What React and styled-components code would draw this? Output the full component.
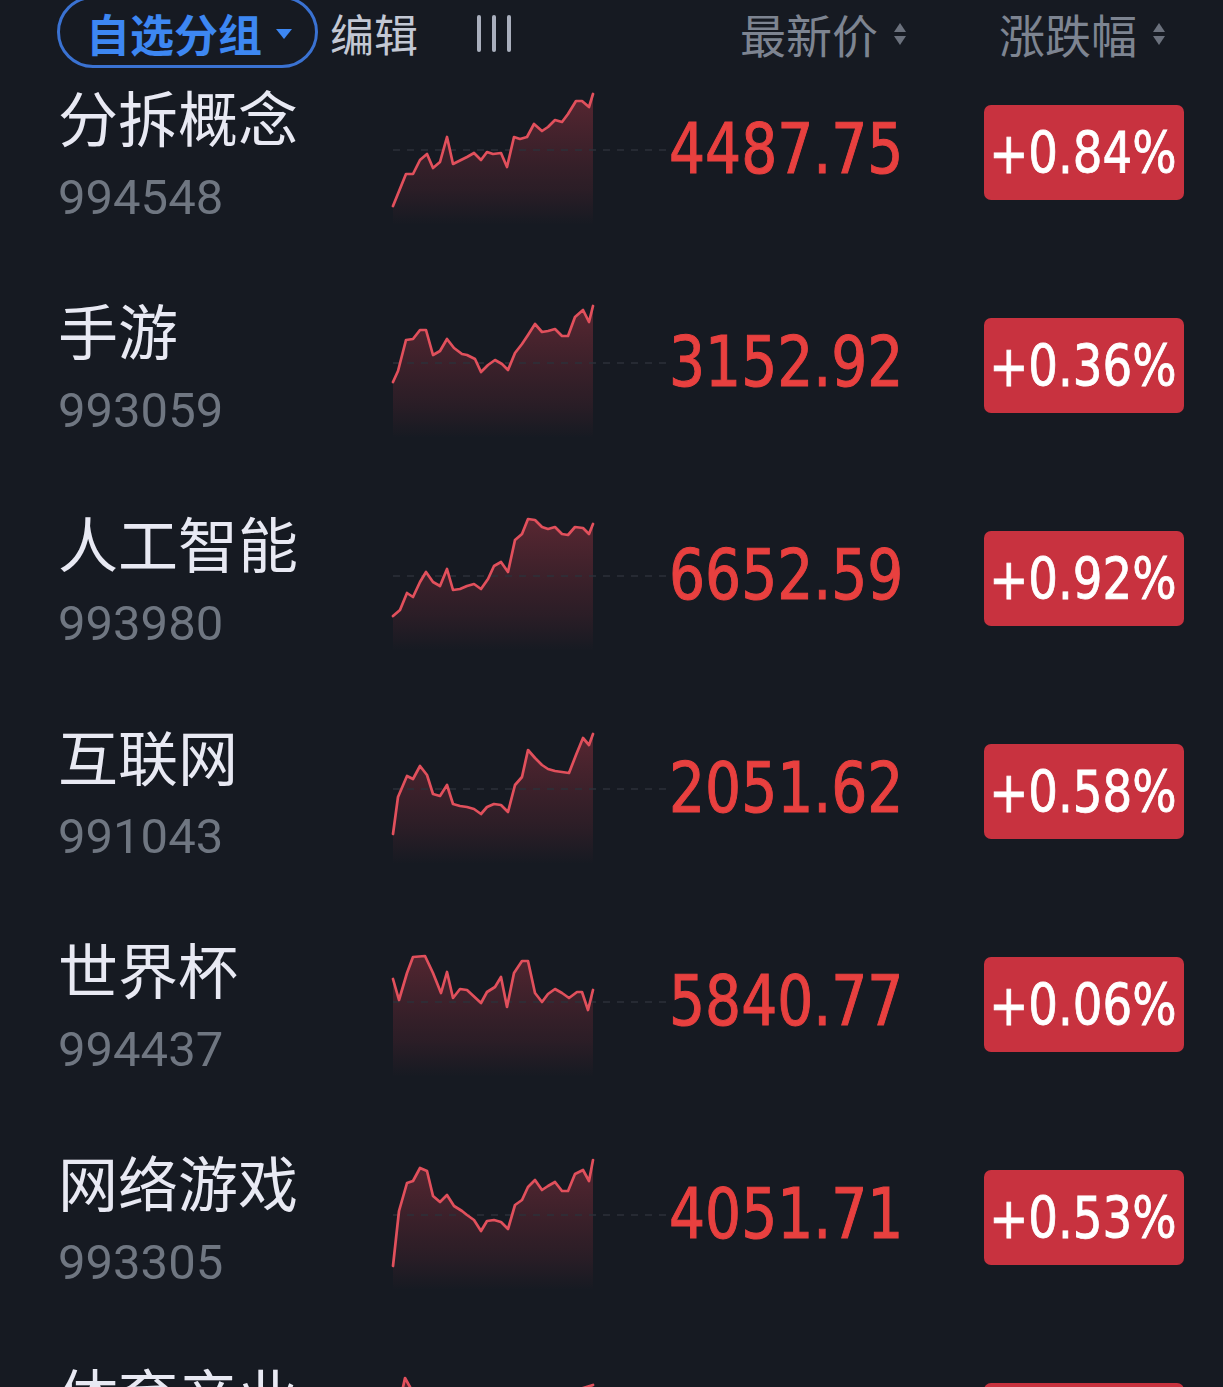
import React, { useId } from 'react'
import styled, { createGlobalStyle } from 'styled-components'

const GlobalStyle = createGlobalStyle`
  html, body {
    margin: 0;
    padding: 0;
    background: #161a22;
  }
  body {
    font-family: "Noto Sans CJK SC", "Noto Sans", sans-serif;
    overflow: hidden;
  }
`;

const NUM_FONT = `"DejaVu Sans Condensed", "DejaVu Sans", sans-serif`;

const Page = styled.div`
  width: 1223px;
  height: 1387px;
  overflow: hidden;
  background: #161a22;
`;

const Header = styled.div`
  display: flex;
  align-items: center;
  height: 66px;
  padding: 0 58px 0 57px;
`;

const Pill = styled.div`
  box-sizing: border-box;
  width: 261px;
  height: 72px;
  margin-top: -3px;
  padding: 2px 0 0 26px;
  border: 3px solid #3a72d2;
  border-radius: 36px;
  display: flex;
  align-items: center;
  gap: 14px;
  color: #3d87f2;
  font-size: 44px;
  font-weight: 700;
`;

const Caret = styled.span`
  width: 0;
  height: 0;
  border-left: 8px solid transparent;
  border-right: 8px solid transparent;
  border-top: 10px solid #3d87f2;
  margin-top: 2px;
`;

const EditText = styled.span`
  margin-left: 12px;
  font-size: 44px;
  color: #c3c8d4;
`;

const ColumnsIcon = styled.div`
  margin-left: 59px;
  display: flex;
  gap: 11px;
  height: 37px;
  span {
    width: 4px;
    border-radius: 2px;
    background: #a9afbd;
  }
`;

const SortGroup = styled.div`
  display: flex;
  align-items: center;
  gap: 16px;
  margin-left: ${p => p.$offset};
  font-size: 46px;
  color: #7d8491;
`;

const SortArrows = styled.div`
  display: flex;
  flex-direction: column;
  gap: 4px;
  margin-top: 2px;
  span {
    width: 0;
    height: 0;
    border-left: 6px solid transparent;
    border-right: 6px solid transparent;
  }
  span:first-child { border-bottom: 9px solid #6b717d; }
  span:last-child { border-top: 9px solid #6b717d; }
`;

const Row = styled.div`
  box-sizing: border-box;
  height: 213px;
  padding: 0 39px 45px 58px;
  display: grid;
  grid-template-columns: 322px 290px 233px 1fr;
  align-items: center;
`;

const NameBlock = styled.div`
  align-self: start;
  margin-top: 14px;
  display: flex;
  flex-direction: column;
  gap: 13px;
`;

const Name = styled.div`
  font-size: 60px;
  line-height: 72px;
  color: #e8e9f3;
  white-space: nowrap;
`;

const Code = styled.div`
  font-family: Roboto, "Noto Sans", sans-serif;
  font-size: 49px;
  line-height: 66px;
  color: #6f7681;
`;

const Chart = styled.svg`
  display: block;
  margin-top: 12px;
`;

const Narrow = styled.span`
  display: inline-block;
  white-space: nowrap;
  transform: scaleX(${p => p.$x});
  transform-origin: ${p => p.$origin};
`;

const Price = styled.div`
  display: flex;
  justify-content: flex-end;
  font-family: ${NUM_FONT};
  font-size: 70px;
  color: #e8403f;
  -webkit-text-stroke: 1px #e8403f;
  line-height: 1;
  margin-top: -3px;
`;

const Badge = styled.div`
  justify-self: end;
  width: 200px;
  height: 95px;
  margin-top: 5px;
  border-radius: 7px;
  background: #c8323f;
  color: #ffffff;
  -webkit-text-stroke: 0.8px #ffffff;
  font-family: ${NUM_FONT};
  font-size: 57px;
  display: flex;
  align-items: center;
  justify-content: center;
  padding-right: 2px;
  box-sizing: border-box;
`;

const rows = [
  {
    name: '分拆概念', code: '994548', price: '4487.75', pct: '+0.84%',
    pts: [[13,125],[26,93],[33,93],[40,79],[47,73],[53,87],[60,81],[67,56],[73,83],[87,76],[94,72],[101,79],[107,71],[113,73],[121,72],[127,86],[134,56],[140,58],[147,56],[154,43],[162,50],[168,46],[175,39],[182,41],[188,33],[196,20],[202,20],[209,26],[213,13]],
  },
  {
    name: '手游', code: '993059', price: '3152.92', pct: '+0.36%',
    pts: [[13,88],[18,77],[26,46],[33,45],[40,36],[46,36],[53,61],[60,57],[67,45],[74,54],[82,60],[87,61],[95,65],[101,78],[108,71],[115,66],[122,70],[128,76],[135,59],[142,50],[148,41],[155,30],[162,38],[168,37],[175,35],[182,42],[188,42],[195,23],[203,16],[209,28],[213,12]],
  },
  {
    name: '人工智能', code: '993980', price: '6652.59', pct: '+0.92%',
    pts: [[13,109],[20,103],[27,86],[33,90],[40,75],[46,65],[53,75],[60,79],[67,62],[73,83],[80,82],[87,79],[94,77],[101,82],[108,72],[114,59],[121,55],[128,65],[135,33],[142,27],[148,12],[155,13],[162,20],[168,22],[175,20],[182,27],[188,28],[195,20],[203,21],[209,27],[213,17]],
  },
  {
    name: '互联网', code: '991043', price: '2051.62', pct: '+0.58%',
    pts: [[13,114],[18,77],[27,56],[33,59],[40,46],[47,55],[53,74],[60,76],[67,65],[73,84],[80,86],[87,87],[94,89],[101,94],[107,87],[114,84],[121,85],[128,92],[135,65],[142,57],[148,30],[155,38],[162,45],[168,49],[175,51],[182,52],[189,53],[196,35],[203,18],[209,25],[213,14]],
  },
  {
    name: '世界杯', code: '994437', price: '5840.77', pct: '+0.06%',
    pts: [[13,46],[19,67],[27,40],[33,24],[45,23],[53,40],[61,60],[67,39],[73,65],[80,56],[87,57],[101,70],[107,59],[115,54],[121,44],[127,74],[134,40],[142,28],[148,28],[155,60],[162,69],[168,61],[175,56],[182,60],[189,65],[197,59],[202,59],[208,77],[213,57]],
  },
  {
    name: '网络游戏', code: '993305', price: '4051.71', pct: '+0.53%',
    pts: [[13,120],[19,65],[27,37],[33,35],[40,22],[47,25],[53,50],[60,56],[67,49],[74,60],[82,65],[87,69],[94,74],[101,85],[107,75],[114,74],[121,76],[128,83],[135,59],[142,54],[148,41],[155,34],[162,44],[168,40],[175,36],[182,45],[188,45],[195,28],[203,24],[209,35],[213,14]],
  },
  {
    name: '体育产业', code: '994352', price: '2836.45', pct: '+0.41%',
    pts: [[13,70],[20,42],[25,19],[30,28],[38,40],[46,36],[54,55],[62,60],[70,52],[80,66],[92,70],[104,62],[116,68],[128,58],[140,50],[152,44],[164,52],[176,40],[188,36],[200,30],[213,26]],
  },
];

function Sparkline({ pts }) {
  const id = useId().replace(/:/g, '');
  const line = pts.map(([x, y]) => `${x},${y}`).join(' ');
  const first = pts[0];
  const last = pts[pts.length - 1];
  const area = `M${line.split(' ').join(' L')} L${last[0]},144 L${first[0]},144 Z`;
  return (
    <Chart width="290" height="150" viewBox="0 0 290 150">
      <defs>
        <linearGradient id={`g${id}`} x1="0" y1="0" x2="0" y2="144" gradientUnits="userSpaceOnUse">
          <stop offset="0" stopColor="#d8404f" stopOpacity="0.38" />
          <stop offset="0.75" stopColor="#b83444" stopOpacity="0.13" />
          <stop offset="1" stopColor="#b83444" stopOpacity="0" />
        </linearGradient>
      </defs>
      <path d={area} fill={`url(#g${id})`} />
      <line x1="13" y1="69" x2="290" y2="69" stroke="#2c313a" strokeWidth="1.5" strokeDasharray="7 7" />
      <polyline points={line} fill="none" stroke="#e1505c" strokeWidth="2.7" strokeLinejoin="round" strokeLinecap="round" />
    </Chart>
  );
}

export default function App() {
  return (
    <Page>
      <GlobalStyle />
      <Header>
        <Pill>自选分组<Caret /></Pill>
        <EditText>编辑</EditText>
        <ColumnsIcon><span /><span /><span /></ColumnsIcon>
        <SortGroup $offset="auto">最新价<SortArrows><span /><span /></SortArrows></SortGroup>
        <SortGroup $offset="93px">涨跌幅<SortArrows><span /><span /></SortArrows></SortGroup>
      </Header>
      {rows.map(r => (
        <Row key={r.code}>
          <NameBlock>
            <Name>{r.name}</Name>
            <Code>{r.code}</Code>
          </NameBlock>
          <Sparkline pts={r.pts} />
          <Price><Narrow $x={0.9} $origin="right">{r.price}</Narrow></Price>
          <Badge><Narrow $x={0.91} $origin="center">{r.pct}</Narrow></Badge>
        </Row>
      ))}
    </Page>
  );
}
